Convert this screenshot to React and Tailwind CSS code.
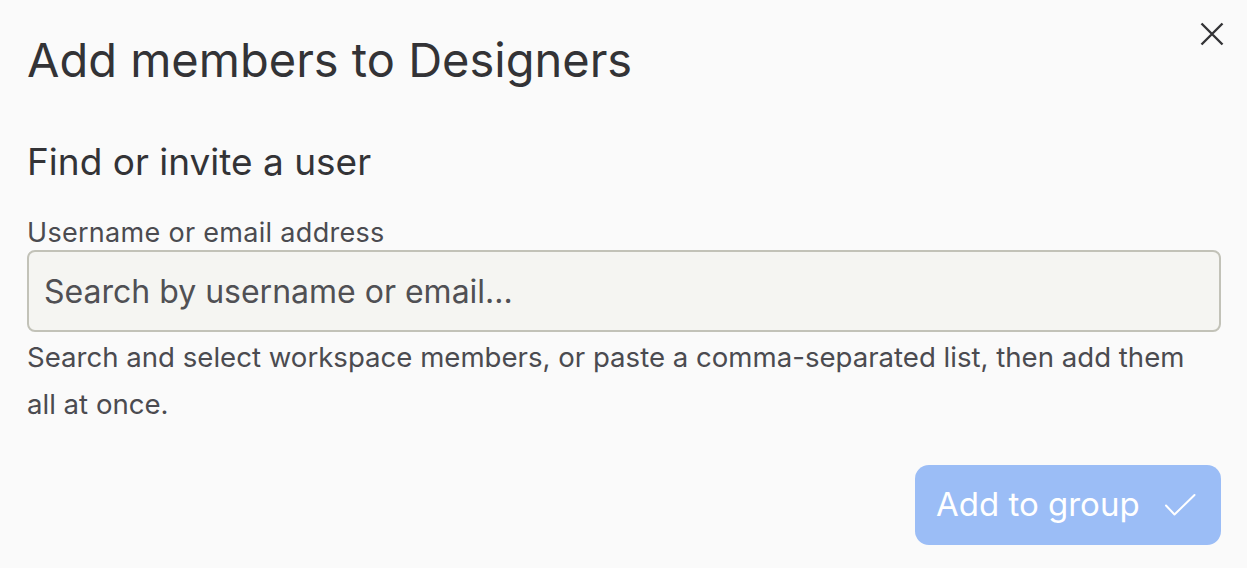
import { useState } from "react";

const CloseIcon = () => (
  <svg width="24" height="24" viewBox="0 0 24 24" fill="none" stroke="currentColor" strokeWidth="2.4" strokeLinecap="butt">
    <path d="M1.5 1.5L22.5 22.5M22.5 1.5L1.5 22.5" />
  </svg>
);

const CheckIcon = () => (
  <svg width="32" height="24" viewBox="0 0 32 24" fill="none" stroke="currentColor" strokeWidth="2" strokeLinecap="round" strokeLinejoin="round">
    <path d="M2 12.5L10.5 21.5L30.5 2" />
  </svg>
);

export default function App() {
  const [query, setQuery] = useState("");

  return (
    <div
      className="w-[1247px] h-[568px] bg-[#fafafa] text-[#333336] relative overflow-hidden"
      style={{ fontFamily: "Inter, 'Noto Sans', sans-serif" }}
    >
      <button className="absolute left-[1200px] top-[22px] text-[#333336]">
        <CloseIcon />
      </button>

      <div className="pl-[27px] pr-[26px] pt-[30px] flex flex-col">
        <h1 className="text-[47px] leading-[59px] font-normal">Add members to Designers</h1>

        <h2 className="mt-[50px] text-[37px] leading-[46px] font-normal">Find or invite a user</h2>

        <label className="mt-[33px] text-[27px] leading-[30px] tracking-[0.3px] text-[#4b4b50]">Username or email address</label>
        <input
          value={query}
          onChange={(e) => setQuery(e.target.value)}
          placeholder="Search by username or email..."
          className="mt-[2px] h-[82px] w-full rounded-[8px] border-2 border-[#c2c2b8] bg-[#f5f5f2] px-[15px] text-[32px] text-[#333336] placeholder:text-[#505054] outline-none"
        />

        <p className="mt-[2px] max-w-[1165px] text-[27.6px] leading-[46.5px] text-[#4b4b50]">
          Search and select workspace members, or paste a comma-separated list, then add them all at once.
        </p>

        <div className="mt-[38px] flex justify-end">
          <button className="h-[80px] w-[306px] rounded-[14px] bg-[#9bbdf6] text-white text-[33px] flex items-center pl-[21px] gap-[24px]">
            <span>Add to group</span>
            <CheckIcon />
          </button>
        </div>
      </div>
    </div>
  );
}
